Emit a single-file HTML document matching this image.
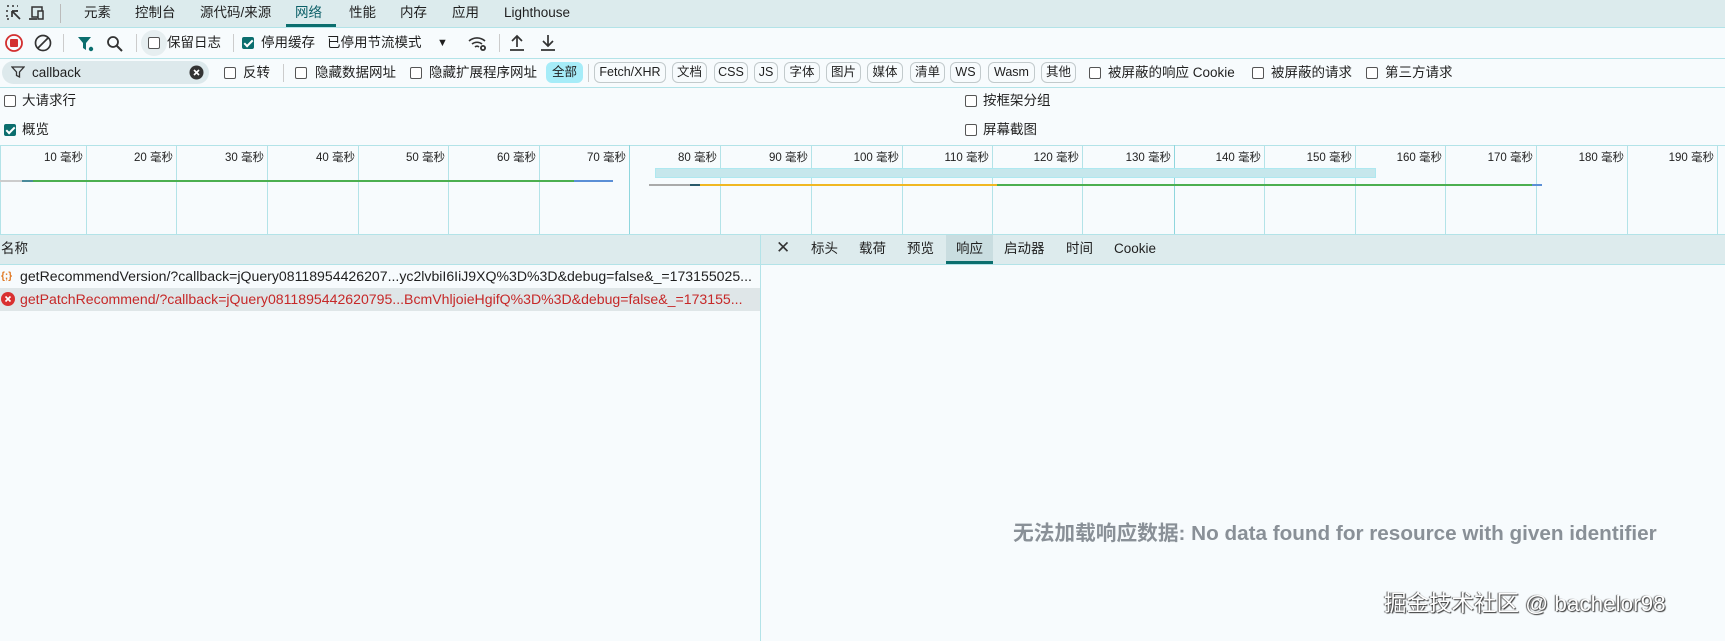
<!DOCTYPE html>
<html><head><meta charset="utf-8"><style>
*{margin:0;padding:0;box-sizing:border-box}
body{width:1725px;height:641px;background:#f7fbfd;font-family:"Liberation Sans","Noto Sans CJK SC",sans-serif;font-size:13.5px;color:#1f1f1f;position:relative;overflow:hidden}
.a{position:absolute;white-space:nowrap;line-height:16px}
.hl{position:absolute;left:0;right:0;height:1px;background:#b3e3e8}
.vl{position:absolute;width:1px;background:#b3e3e8}
.cb{position:absolute;width:12px;height:12px;border:1.3px solid #555;border-radius:2px;background:#fff}
.cb.on{background:#0b6e6e;border-color:#0b6e6e}
.cb.on:after{content:"";position:absolute;left:3px;top:0px;width:3px;height:7px;border:solid #fff;border-width:0 2px 2px 0;transform:rotate(45deg)}
.pill{position:absolute;top:62px;height:21px;border:1px solid #c2cacc;border-radius:6px;font-size:12.5px;line-height:19px;text-align:center;background:#f7fbfd}
.tl{position:absolute;top:151px;font-size:11.5px;line-height:14px;color:#222;text-align:right;width:60px}
</style></head><body>
<!-- tab bar -->
<div class="a" style="left:0;top:0;width:1725px;height:27px;background:#dcebed"></div>
<div class="hl" style="top:27px"></div>
<svg class="a" style="left:5px;top:4px" width="40" height="18" viewBox="0 0 40 18"><path d="M2 2h2M7 2h2M12 2h1M2 6v2M2 11v2M2 15h2M12 6v1" stroke="#333" stroke-width="1.5" fill="none"/><path d="M7 7l8 8M7 7v6M7 7h6" stroke="#333" stroke-width="1.7" fill="none"/><rect x="27" y="3" width="10" height="10" stroke="#333" stroke-width="1.5" fill="none"/><path d="M24 15h8" stroke="#333" stroke-width="1.7"/><rect x="33" y="7" width="5" height="8" stroke="#333" stroke-width="1.5" fill="#dcebed"/></svg>
<div class="vl" style="left:60px;top:4px;height:19px;background:#bbb"></div>
<div class="a" style="left:84px;top:5px">元素</div>
<div class="a" style="left:135px;top:5px">控制台</div>
<div class="a" style="left:200px;top:5px">源代码/来源</div>
<div class="a" style="left:295px;top:5px;color:#0b5f67">网络</div>
<div class="a" style="left:286px;top:24px;width:50px;height:3px;background:#0b6e6e"></div>
<div class="a" style="left:349px;top:5px">性能</div>
<div class="a" style="left:400px;top:5px">内存</div>
<div class="a" style="left:452px;top:5px">应用</div>
<div class="a" style="left:504px;top:5px">Lighthouse</div>
<!-- toolbar -->
<svg class="a" style="left:4px;top:33px" width="20" height="20"><circle cx="10" cy="10" r="8" stroke="#d32f2f" stroke-width="1.8" fill="none"/><rect x="6" y="6" width="8" height="8" rx="1" fill="#d32f2f"/></svg>
<svg class="a" style="left:33px;top:33px" width="20" height="20"><circle cx="10" cy="10" r="7.5" stroke="#333" stroke-width="1.7" fill="none"/><path d="M5 15L15 5" stroke="#333" stroke-width="1.7"/></svg>
<div class="vl" style="left:63px;top:34px;height:18px;background:#ccc"></div>
<svg class="a" style="left:76px;top:34px" width="20" height="20"><path d="M2 3h13l-5 6v7l-3-2V9z" fill="#0b6e6e"/><circle cx="15" cy="15" r="2.2" fill="#0b6e6e"/></svg>
<svg class="a" style="left:105px;top:34px" width="20" height="20"><circle cx="8" cy="8" r="5" stroke="#333" stroke-width="1.8" fill="none"/><path d="M12 12l5 5" stroke="#333" stroke-width="2"/></svg>
<div class="vl" style="left:136px;top:34px;height:18px;background:#ccc"></div>
<div class="a" style="left:141px;top:30px;width:26px;height:26px;border-radius:13px;background:#e6eef0"></div>
<div class="cb" style="left:148px;top:37px"></div>
<div class="a" style="left:167px;top:35px">保留日志</div>
<div class="vl" style="left:233px;top:34px;height:18px;background:#ccc"></div>
<div class="cb on" style="left:242px;top:37px"></div>
<div class="a" style="left:261px;top:35px">停用缓存</div>
<div class="a" style="left:327px;top:35px">已停用节流模式</div>
<div class="a" style="left:437px;top:35px;font-size:11px">▼</div>
<svg class="a" style="left:467px;top:33px" width="22" height="20"><path d="M2 8a12 12 0 0 1 16 0M5 11a8 8 0 0 1 10 0M8 14a3 3 0 0 1 4 0" stroke="#333" stroke-width="1.6" fill="none"/><circle cx="16" cy="15" r="3" fill="#333"/><circle cx="16" cy="15" r="1.2" fill="#f7fbfd"/></svg>
<div class="vl" style="left:499px;top:34px;height:18px;background:#ccc"></div>
<svg class="a" style="left:507px;top:33px" width="20" height="20"><path d="M10 14V3M5 8l5-5 5 5M3 17h14" stroke="#333" stroke-width="1.7" fill="none"/></svg>
<svg class="a" style="left:538px;top:33px" width="20" height="20"><path d="M10 2v11M5 8l5 5 5-5M3 17h14" stroke="#333" stroke-width="1.7" fill="none"/></svg>
<div class="hl" style="top:58px"></div>
<!-- filter row -->
<div class="a" style="left:2px;top:61px;width:207px;height:23px;border-radius:12px;background:#dde9ec"></div>
<svg class="a" style="left:11px;top:65px" width="14" height="14"><path d="M1 2h12l-4.5 5v5l-3-1.5V7z" stroke="#333" stroke-width="1.3" fill="none"/></svg>
<div class="a" style="left:32px;top:65px">callback</div>
<svg class="a" style="left:189px;top:65px" width="15" height="15"><circle cx="7.5" cy="7.5" r="7" fill="#333"/><path d="M5 5l5 5M10 5l-5 5" stroke="#fff" stroke-width="1.6"/></svg>
<div class="cb" style="left:224px;top:67px"></div><div class="a" style="left:243px;top:65px">反转</div>
<div class="vl" style="left:283px;top:64px;height:18px;background:#ccc"></div>
<div class="cb" style="left:295px;top:67px"></div><div class="a" style="left:315px;top:65px">隐藏数据网址</div>
<div class="cb" style="left:410px;top:67px"></div><div class="a" style="left:429px;top:65px">隐藏扩展程序网址</div>
<div class="pill" style="left:546px;width:37px;background:#a6ecf8;border-color:#a6ecf8">全部</div>
<div class="vl" style="left:588px;top:64px;height:18px;background:#ccc"></div>
<div class="pill" style="left:594px;width:72px">Fetch/XHR</div>
<div class="pill" style="left:672px;width:35px">文档</div>
<div class="pill" style="left:714px;width:34px">CSS</div>
<div class="pill" style="left:754px;width:24px">JS</div>
<div class="pill" style="left:784px;width:36px">字体</div>
<div class="pill" style="left:826px;width:35px">图片</div>
<div class="pill" style="left:867px;width:36px">媒体</div>
<div class="pill" style="left:910px;width:35px">清单</div>
<div class="pill" style="left:950px;width:31px">WS</div>
<div class="pill" style="left:988px;width:47px">Wasm</div>
<div class="pill" style="left:1041px;width:35px">其他</div>
<div class="cb" style="left:1089px;top:67px"></div><div class="a" style="left:1108px;top:65px">被屏蔽的响应 Cookie</div>
<div class="cb" style="left:1252px;top:67px"></div><div class="a" style="left:1271px;top:65px">被屏蔽的请求</div>
<div class="cb" style="left:1366px;top:67px"></div><div class="a" style="left:1385px;top:65px">第三方请求</div>
<div class="hl" style="top:87px"></div>
<!-- options -->
<div class="cb" style="left:4px;top:95px"></div><div class="a" style="left:22px;top:93px">大请求行</div>
<div class="cb on" style="left:4px;top:124px"></div><div class="a" style="left:22px;top:122px">概览</div>
<div class="cb" style="left:965px;top:95px"></div><div class="a" style="left:983px;top:93px">按框架分组</div>
<div class="cb" style="left:965px;top:124px"></div><div class="a" style="left:983px;top:122px">屏幕截图</div>
<!-- timeline -->
<div class="hl" style="top:145px"></div>
<div class="vl" style="left:0;top:145px;height:89px"></div>
<div class="vl" style="left:86px;top:145px;height:89px"></div><div class="tl" style="left:23px">10 毫秒</div>
<div class="vl" style="left:176px;top:145px;height:89px"></div><div class="tl" style="left:113px">20 毫秒</div>
<div class="vl" style="left:267px;top:145px;height:89px"></div><div class="tl" style="left:204px">30 毫秒</div>
<div class="vl" style="left:358px;top:145px;height:89px"></div><div class="tl" style="left:295px">40 毫秒</div>
<div class="vl" style="left:448px;top:145px;height:89px"></div><div class="tl" style="left:385px">50 毫秒</div>
<div class="vl" style="left:539px;top:145px;height:89px"></div><div class="tl" style="left:476px">60 毫秒</div>
<div class="vl" style="left:629px;top:145px;height:89px;background:#8fd6dd"></div><div class="tl" style="left:566px">70 毫秒</div>
<div class="vl" style="left:720px;top:145px;height:89px"></div><div class="tl" style="left:657px">80 毫秒</div>
<div class="vl" style="left:811px;top:145px;height:89px"></div><div class="tl" style="left:748px">90 毫秒</div>
<div class="vl" style="left:902px;top:145px;height:89px"></div><div class="tl" style="left:839px">100 毫秒</div>
<div class="vl" style="left:992px;top:145px;height:89px"></div><div class="tl" style="left:929px">110 毫秒</div>
<div class="vl" style="left:1082px;top:145px;height:89px"></div><div class="tl" style="left:1019px">120 毫秒</div>
<div class="vl" style="left:1174px;top:145px;height:89px;background:#8fd6dd"></div><div class="tl" style="left:1111px">130 毫秒</div>
<div class="vl" style="left:1264px;top:145px;height:89px"></div><div class="tl" style="left:1201px">140 毫秒</div>
<div class="vl" style="left:1355px;top:145px;height:89px"></div><div class="tl" style="left:1292px">150 毫秒</div>
<div class="vl" style="left:1445px;top:145px;height:89px"></div><div class="tl" style="left:1382px">160 毫秒</div>
<div class="vl" style="left:1536px;top:145px;height:89px"></div><div class="tl" style="left:1473px">170 毫秒</div>
<div class="vl" style="left:1627px;top:145px;height:89px"></div><div class="tl" style="left:1564px">180 毫秒</div>
<div class="vl" style="left:1717px;top:145px;height:89px"></div><div class="tl" style="left:1654px">190 毫秒</div>
<div class="a" style="left:0;top:180px;width:22px;height:2px;background:#ccc"></div>
<div class="a" style="left:22px;top:180px;width:11px;height:2px;background:#4a8a9a"></div>
<div class="a" style="left:33px;top:180px;width:541px;height:2px;background:#4caf50"></div>
<div class="a" style="left:574px;top:180px;width:39px;height:2px;background:#5b8fd6"></div>
<div class="a" style="left:655px;top:168px;width:721px;height:10px;background:#c6e7ec;border:1px solid #aee8f0"></div>
<div class="a" style="left:649px;top:184px;width:41px;height:2px;background:#aaa"></div>
<div class="a" style="left:690px;top:184px;width:10px;height:2px;background:#2a5a6a"></div>
<div class="a" style="left:700px;top:184px;width:297px;height:2px;background:#f0b823"></div>
<div class="a" style="left:997px;top:184px;width:535px;height:2px;background:#4caf50"></div>
<div class="a" style="left:1532px;top:184px;width:10px;height:2px;background:#5b8fd6"></div>
<div class="hl" style="top:234px"></div>
<!-- name header -->
<div class="a" style="left:0;top:235px;width:1725px;height:29px;background:#ddebed"></div>
<div class="hl" style="top:264px"></div>
<div class="a" style="left:1px;top:241px">名称</div>
<div class="vl" style="left:760px;top:234px;height:407px"></div>
<div class="a" style="left:776px;top:240px;font-size:17px;color:#333">✕</div>
<div class="a" style="left:811px;top:241px">标头</div>
<div class="a" style="left:859px;top:241px">载荷</div>
<div class="a" style="left:907px;top:241px">预览</div>
<div class="a" style="left:946px;top:235px;width:47px;height:29px;background:#c9dde0"></div>
<div class="a" style="left:946px;top:261px;width:47px;height:3px;background:#0b6e6e"></div>
<div class="a" style="left:956px;top:241px">响应</div>
<div class="a" style="left:1004px;top:241px">启动器</div>
<div class="a" style="left:1066px;top:241px">时间</div>
<div class="a" style="left:1114px;top:241px">Cookie</div>
<!-- rows -->
<div class="a" style="left:1px;top:269px;font-size:10px;color:#e0761f;font-weight:bold">{;}</div>
<div class="a" style="left:20px;top:268px;font-size:14.1px">getRecommendVersion/?callback=jQuery08118954426207...yc2lvbiI6IiJ9XQ%3D%3D&amp;debug=false&amp;_=173155025...</div>
<div class="a" style="left:0;top:288px;width:760px;height:23px;background:#dfe6e8"></div>
<svg class="a" style="left:1px;top:292px" width="14" height="14"><circle cx="7" cy="7" r="7" fill="#d93030"/><path d="M4.5 4.5l5 5M9.5 4.5l-5 5" stroke="#fff" stroke-width="1.6"/></svg>
<div class="a" style="left:20px;top:291px;font-size:14.1px;color:#c62828">getPatchRecommend/?callback=jQuery0811895442620795...BcmVhljoieHgifQ%3D%3D&amp;debug=false&amp;_=173155...</div>
<div class="a" style="left:1013px;top:522px;font-size:20.7px;line-height:24px;font-weight:bold;color:#899097">无法加载响应数据: No data found for resource with given identifier</div>
<div class="a" style="left:1384px;top:590px;font-size:22.5px;line-height:28px;color:#fff;text-shadow:1px 1px 1px #333,-1px 0 1px #555">掘金技术社区 @ bachelor98</div>
</body></html>
